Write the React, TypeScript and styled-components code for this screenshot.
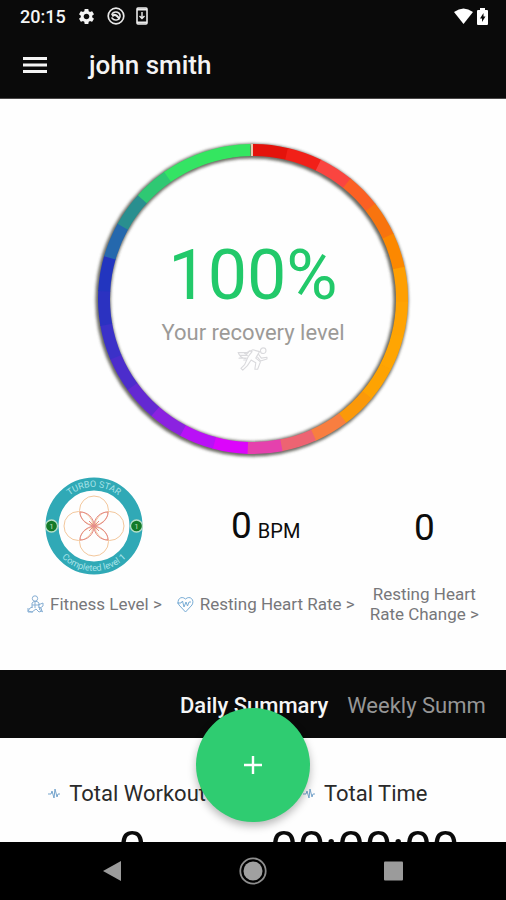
import React from "react";
import styled, { createGlobalStyle } from "styled-components";
import { MdSettings } from "react-icons/md";

const GlobalStyle = createGlobalStyle`
  * { box-sizing: border-box; }
  body { margin: 0; background: #fefefe; font-family: Roboto, "Noto Sans", sans-serif; }
  button { font: inherit; border: 0; padding: 0; background: none; cursor: pointer; }
  a { color: inherit; text-decoration: none; }
  h1, h2, p { margin: 0; font-weight: 400; }
`;

const Screen = styled.div`
  position: relative;
  display: flex;
  flex-direction: column;
  height: 100vh;
  overflow: hidden;
`;

const StatusBar = styled.div`
  display: flex;
  align-items: center;
  justify-content: space-between;
  height: 32px;
  padding: 0 18px 0 20px;
  background: #0a0a0a;
  color: #f4f4f4;
  font-size: 18px;
  font-weight: 500;
`;

const StatusGroup = styled.div<{ $gap: number }>`
  display: flex;
  align-items: center;
  gap: ${(p) => p.$gap}px;
  svg { display: block; }
`;

const AppBar = styled.header`
  display: flex;
  align-items: center;
  gap: 42px;
  height: 67px;
  padding: 0 23px;
  background: #0a0a0a;
  border-bottom: 1px solid #4a4848;
  color: #f4f4f4;
`;

const MenuButton = styled.button`
  display: flex;
  color: inherit;
`;

const Title = styled.h1`
  font-size: 26px;
  line-height: 32px;
  font-weight: 500;
`;

const Content = styled.main`
  display: flex;
  flex: 1;
  flex-direction: column;
  min-height: 0;
  overflow: hidden;
`;

const Gauge = styled.section`
  display: grid;
  justify-items: center;
  padding-top: 35px;
  > * { grid-area: 1 / 1; }
`;

const GaugeText = styled.div`
  display: flex;
  flex-direction: column;
  align-items: center;
  align-self: center;
  padding-top: 10px;
`;

const Percent = styled.p`
  color: #22c96a;
  font-size: 70px;
  line-height: 80px;
`;

const Caption = styled.p`
  margin-top: 4px;
  color: #9c9a97;
  font-size: 22px;
  line-height: 28px;
`;

const Stats = styled.section`
  display: flex;
  justify-content: center;
  gap: 15px;
  padding: 11px 16px 39px;
`;

const Stat = styled.div`
  display: flex;
  flex-direction: column;
  align-items: center;
`;

const StatValue = styled.div`
  display: flex;
  align-items: center;
  height: 102px;
`;

const Figure = styled.p`
  padding-top: 4px;
  color: #0c0c0c;
  font-size: 37px;
  line-height: 44px;
`;

const Unit = styled.span`
  margin-left: 6px;
  font-size: 20px;
`;

const StatLink = styled.a`
  display: flex;
  align-items: center;
  gap: 6px;
  height: 54px;
  color: #77777a;
  font-size: 17px;
  line-height: 20px;
  text-align: center;
  white-space: nowrap;
  svg { flex: none; }
`;

const TabBar = styled.nav`
  display: flex;
  flex: none;
  height: 68px;
  padding: 4px 20px 0;
  background: #0a0a0a;
`;

const TabScroller = styled.div`
  display: flex;
  flex: 1;
  align-items: center;
  gap: 19px;
  min-width: 0;
  padding-left: calc(50% - 73px);
  overflow: hidden;
`;

const Tab = styled.button<{ $active?: boolean }>`
  flex: none;
  color: ${(p) => (p.$active ? "#f6f6f6" : "#969696")};
  font-size: 22px;
  line-height: 28px;
  font-weight: ${(p) => (p.$active ? 500 : 400)};
`;

const Totals = styled.section`
  display: grid;
  grid-template-columns: 1fr 1fr;
  padding: 41px 25px 0 16px;
`;

const Total = styled.div`
  display: flex;
  flex-direction: column;
  align-items: center;
`;

const TotalLabel = styled.h2`
  display: flex;
  align-items: center;
  gap: 8px;
  color: #2a2a2a;
  font-size: 22px;
  line-height: 30px;
`;

const TotalValue = styled.p`
  margin-top: 10px;
  color: #0a0a0a;
  font-size: 49px;
  line-height: 60px;
`;

const AddButton = styled.button`
  position: absolute;
  bottom: 78px;
  left: 50%;
  display: flex;
  align-items: center;
  justify-content: center;
  width: 114px;
  height: 114px;
  margin-left: -57px;
  border-radius: 50%;
  background: #2fcc71;
  box-shadow: 0 4px 9px rgba(0, 0, 0, 0.28);
`;

const SystemNav = styled.nav`
  display: flex;
  flex: none;
  align-items: center;
  justify-content: center;
  gap: 112px;
  height: 58px;
  background: #000;
`;

const NavButton = styled.button`
  display: flex;
`;

const RING_COLORS = [
  "#e4130b", "#f12018", "#fa4540", "#fb6023", "#f8740e", "#fc8800", "#fe9f02",
  "#ffa303", "#ffa502", "#fea302", "#fb9909", "#f87e40", "#ed6472", "#e541ad",
  "#dc05fb", "#b911f6", "#8b22e0", "#6429d2", "#4c2dcc", "#3b31c8", "#2b32c1",
  "#2235bf", "#2568ad", "#298f8f", "#2fc873", "#34e464", "#34e660", "#34e660",
];

function arcPath(from: number, to: number) {
  const point = (deg: number) => {
    const a = ((deg - 90) * Math.PI) / 180;
    return `${(165 + 149 * Math.cos(a)).toFixed(2)} ${(165 + 149 * Math.sin(a)).toFixed(2)}`;
  };
  return `M${point(from)}A149 149 0 0 1 ${point(to)}`;
}

const RecoveryRing = () => (
  <svg width="330" height="330" viewBox="0 0 330 330" fill="none" aria-hidden="true">
    <defs>
      <filter id="ring-shade" x="-5%" y="-5%" width="110%" height="110%">
        <feGaussianBlur stdDeviation="1.6" />
      </filter>
    </defs>
    <circle cx="164" cy="166" r="149" stroke="#45453a" strokeWidth="15" opacity=".8" filter="url(#ring-shade)" />
    {RING_COLORS.map((color, i) => (
      <path key={i} d={arcPath(i * 13, Math.min(i * 13 + 13.3, 359))} stroke={color} strokeWidth="12" />
    ))}
    <path d="M164 10v12" stroke="#e9c9b0" strokeWidth="2" />
  </svg>
);

const RunnerIcon = () => (
  <svg width="34" height="26" viewBox="0 0 34 28" fill="none" stroke="#dadadd" strokeWidth="1.2" strokeLinejoin="round" strokeLinecap="round" aria-hidden="true">
    <circle cx="28" cy="4" r="3" />
    <path d="M17 3l7 2-4 7 5 4-3 8h-3l1-7-5-3-4 6-5 5-2-2 4-4 4-9 4-5-3-1-3 4-2-1z" />
    <path d="M23 8l3 4 6-1v2l-7 2-3-4M1 6h11M3 9h8M2 12h7M7 14h3M1 6c2 5 5 7 9 6" />
  </svg>
);

const Badge = () => (
  <svg width="100" height="100" viewBox="0 0 100 100" fill="none" role="img" aria-label="Turbo Star, completed level 1">
    <defs>
      <path id="badge-top" d="M11 50A39 39 0 0 1 89 50" />
      <path id="badge-bottom" d="M5 50A45 45 0 0 0 95 50" />
    </defs>
    <circle cx="50" cy="50" r="42" stroke="#30a9b6" strokeWidth="13" />
    <g strokeWidth="1" stroke="#f3c79c">
      <circle cx="50" cy="34.500" r="14.500" />
      <circle cx="50" cy="65.500" r="14.500" />
      <circle cx="34.500" cy="50" r="14.500" />
      <circle cx="65.500" cy="50" r="14.500" />
    </g>
    <g stroke="#e58a86" strokeWidth="1">
      <path d="M50 50C42 49 36 43 36 36C43 36 50 41 50 50C50 41 57 36 64 36C64 43 58 49 50 50C58 51 64 57 64 64C57 64 50 59 50 50C50 59 43 64 36 64C36 57 42 51 50 50" />
      <path d="M45 45l10 10M55 45L45 55" />
    </g>
    <g fill="#a9e3e8" fontSize="9" textAnchor="middle">
      <text><textPath href="#badge-top" startOffset="50%">TURBO STAR</textPath></text>
      <text><textPath href="#badge-bottom" startOffset="50%">Completed level 1</textPath></text>
    </g>
    <g fill="#137a28" stroke="#b6dfca" strokeWidth="1.300">
      <circle cx="7.500" cy="50" r="6" />
      <circle cx="92.500" cy="50" r="6" />
    </g>
    <g fill="#c0dfbe" fontSize="8" textAnchor="middle">
      <text x="7.500" y="53">1</text>
      <text x="92.500" y="53">1</text>
    </g>
  </svg>
);

const FitnessIcon = () => (
  <svg width="17" height="18" viewBox="0 0 17 18" fill="none" stroke="#86aed3" strokeWidth="1" aria-hidden="true">
    <circle cx="8" cy="3.500" r="2.700" />
    <path d="M5 12V8l2-1.500h3L12 8v4M5 10h7M6 12l-3 1-2 3 4 1 4-3 3 3 3-1-1-3-3-1M1 13v4h5M11 10l5-2v3l-4 3 4 3M8 7v6" />
  </svg>
);

const HeartIcon = () => (
  <svg width="17" height="17" viewBox="0 0 17 17" fill="none" stroke="#78acd5" strokeWidth="1" strokeLinejoin="round" aria-hidden="true">
    <path d="M8.500 16L2 9C-1 4 4-1 8.500 3C13-1 18 4 15 9z" />
    <path d="M0 7h4l1.500-2L7 11l2-5 1.500 4L12 6h2" />
  </svg>
);

const PulseIcon = () => (
  <svg width="14" height="12" viewBox="0 0 14 12" fill="none" stroke="#76a5cd" strokeWidth="1" strokeLinejoin="round" aria-hidden="true">
    <path d="M1 6h3l1-3 2 7 1-9 2 8 1-3h2" />
  </svg>
);

const MenuIcon = () => (
  <svg width="24" height="18" viewBox="0 0 24 18" fill="currentColor" aria-hidden="true">
    <path d="M0 1h24v3H0zM0 7.500h24v3H0zM0 14h24v3H0z" />
  </svg>
);

const SwirlIcon = () => (
  <svg width="18" height="18" viewBox="0 0 18 18" fill="none" stroke="#e8e8e8" strokeLinecap="round" aria-hidden="true">
    <circle cx="9" cy="9" r="7.800" strokeWidth="1.700" />
    <path d="M5 7.500C6 4 12 4 13 8c.5 3-1.500 5-3.500 5M5 11c1 1.500 2 2 3.500 2" strokeWidth="1.600" />
    <path d="M6 8.500q2-1.500 4 .5t2 2.500" strokeWidth="2.200" />
  </svg>
);

const UpdateIcon = () => (
  <svg width="12" height="18" viewBox="0 0 12 18" fill="none" stroke="#ececec" aria-hidden="true">
    <rect x="1" y="1" width="10" height="16" rx="1" strokeWidth="1.600" />
    <path d="M1 2.500h10M1 15.500h10" strokeWidth="2" />
    <path d="M6 5v6M3.500 9L6 11.500 8.500 9" strokeWidth="1.400" />
  </svg>
);

const BatteryIcon = () => (
  <svg width="11" height="17" viewBox="0 0 11 17" fill="#fff" aria-hidden="true">
    <path d="M3 0h5v2h2q1 0 1 1v13q0 1-1 1H1q-1 0-1-1V3q0-1 1-1h2z" />
    <path d="M6.500 5L3 10.500h2V14l3.500-5.500h-2z" fill="#0a0a0a" />
  </svg>
);

export default function App() {
  return (
    <Screen>
      <GlobalStyle />
      <StatusBar>
        <StatusGroup $gap={11}>
          <span>20:15</span>
          <MdSettings size={19} />
          <SwirlIcon />
          <UpdateIcon />
        </StatusGroup>
        <StatusGroup $gap={4}>
          <svg width="19" height="17" viewBox="0 0 19 17" aria-hidden="true">
            <path d="M0 4Q9.500-3 19 4L9.500 16z" fill="#fff" />
          </svg>
          <BatteryIcon />
        </StatusGroup>
      </StatusBar>
      <AppBar>
        <MenuButton aria-label="Open menu"><MenuIcon /></MenuButton>
        <Title>john smith</Title>
      </AppBar>

      <Content>
        <Gauge>
          <RecoveryRing />
          <GaugeText>
            <Percent>100%</Percent>
            <Caption>Your recovery level</Caption>
            <RunnerIcon />
          </GaugeText>
        </Gauge>

        <Stats>
          <Stat>
            <StatValue><Badge /></StatValue>
            <StatLink href="#fitness"><FitnessIcon />Fitness Level &gt;</StatLink>
          </Stat>
          <Stat>
            <StatValue><Figure>0<Unit>BPM</Unit></Figure></StatValue>
            <StatLink href="#heart-rate"><HeartIcon />Resting Heart Rate &gt;</StatLink>
          </Stat>
          <Stat>
            <StatValue><Figure>0</Figure></StatValue>
            <StatLink href="#rate-change">Resting Heart<br />Rate Change &gt;</StatLink>
          </Stat>
        </Stats>

        <TabBar>
          <TabScroller>
            <Tab $active>Daily Summary</Tab>
            <Tab>Weekly Summary</Tab>
          </TabScroller>
        </TabBar>

        <Totals>
          <Total>
            <TotalLabel><PulseIcon />Total Workouts</TotalLabel>
            <TotalValue>0</TotalValue>
          </Total>
          <Total>
            <TotalLabel><PulseIcon />Total Time</TotalLabel>
            <TotalValue>00:00:00</TotalValue>
          </Total>
        </Totals>
      </Content>

      <AddButton aria-label="Add workout">
        <svg width="20" height="20" viewBox="0 0 20 20" stroke="#fff" strokeWidth="2.400" aria-hidden="true">
          <path d="M10 1v18M1 10h18" />
        </svg>
      </AddButton>

      <SystemNav>
        <NavButton aria-label="Back">
          <svg width="28" height="28" viewBox="0 0 28 28"><path d="M4 14L22 4v20z" fill="#9b9b9b" /></svg>
        </NavButton>
        <NavButton aria-label="Home">
          <svg width="28" height="28" viewBox="0 0 28 28">
            <circle cx="14" cy="14" r="12.700" fill="none" stroke="#8e8e8e" strokeWidth="1.800" />
            <circle cx="14" cy="14" r="9.500" fill="#a0a0a0" />
          </svg>
        </NavButton>
        <NavButton aria-label="Recent apps">
          <svg width="28" height="28" viewBox="0 0 28 28"><rect x="5" y="4.500" width="19" height="19" rx="1" fill="#9b9b9b" /></svg>
        </NavButton>
      </SystemNav>
    </Screen>
  );
}
